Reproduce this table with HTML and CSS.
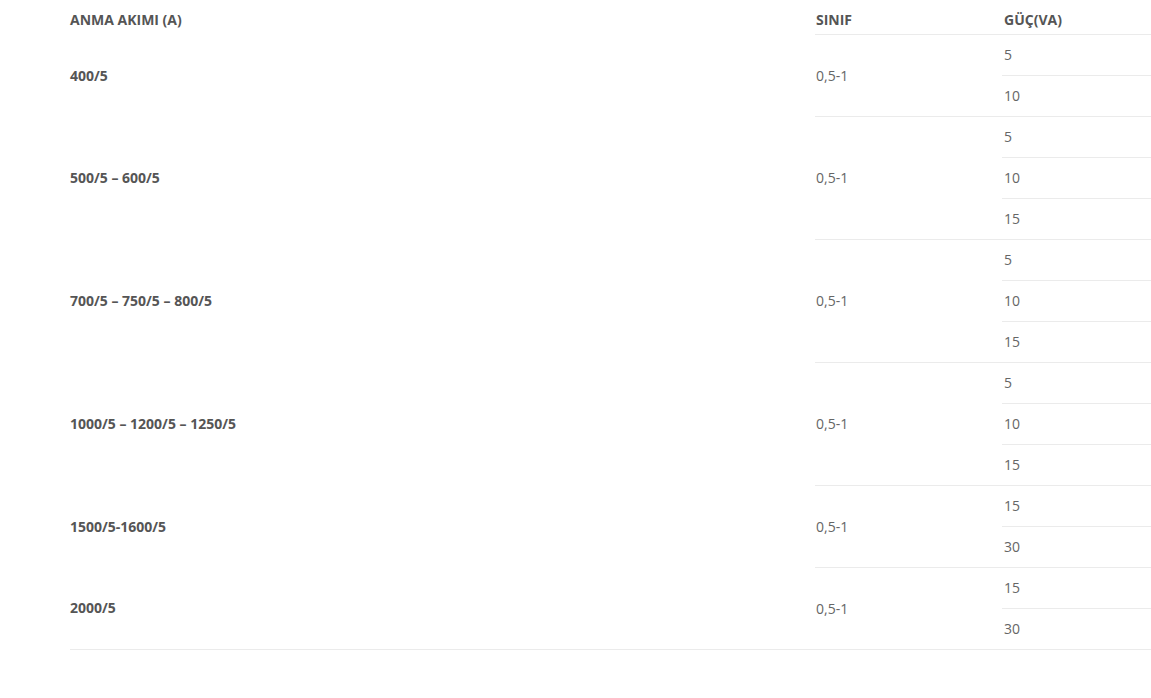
FILE: index.html
```html
<!DOCTYPE html>
<html lang="tr">
<head>
<meta charset="utf-8">
<link rel="stylesheet" href="styles.css">
</head>
<body>
<table class="spec">
  <thead>
    <tr>
      <th class="c1">ANMA AKIMI (A)</th>
      <th class="c2">SINIF</th>
      <th class="c3">GÜÇ(VA)</th>
    </tr>
  </thead>
  <tbody>
    <tr><td class="name" rowspan="2">400/5</td><td class="cls" rowspan="2">0,5-1</td><td class="va">5</td></tr>
    <tr><td class="va">10</td></tr>
    <tr><td class="name" rowspan="3">500/5 – 600/5</td><td class="cls" rowspan="3">0,5-1</td><td class="va">5</td></tr>
    <tr><td class="va">10</td></tr>
    <tr><td class="va">15</td></tr>
    <tr><td class="name" rowspan="3">700/5 – 750/5 – 800/5</td><td class="cls" rowspan="3">0,5-1</td><td class="va">5</td></tr>
    <tr><td class="va">10</td></tr>
    <tr><td class="va">15</td></tr>
    <tr><td class="name" rowspan="3">1000/5 – 1200/5 – 1250/5</td><td class="cls" rowspan="3">0,5-1</td><td class="va">5</td></tr>
    <tr><td class="va">10</td></tr>
    <tr><td class="va">15</td></tr>
    <tr><td class="name" rowspan="2">1500/5-1600/5</td><td class="cls" rowspan="2">0,5-1</td><td class="va">15</td></tr>
    <tr><td class="va">30</td></tr>
    <tr><td class="name" rowspan="2">2000/5</td><td class="cls" rowspan="2">0,5-1</td><td class="va">15</td></tr>
    <tr><td class="va">30</td></tr>
  </tbody>
</table>
</body>
</html>
```
FILE: styles.css
```css
html, body {
  margin: 0;
  padding: 0;
  background: #fff;
}
body {
  font-family: "Open Sans", "Liberation Sans", sans-serif;
  font-size: 14px;
  color: #666;
}
.spec {
  margin-left: 70px;
  width: 1081px;
  border-collapse: collapse;
  border-bottom: 1px solid #ebebeb;
}
.spec th {
  text-align: left;
  font-weight: 700;
  color: #555;
  padding: 10px 0 4px 1px;
  line-height: 20px;
}
.spec td {
  padding: 10px 0 10px 1px;
  line-height: 20px;
  vertical-align: middle;
  text-align: left;
}
.spec th.c1,
.spec td.name {
  padding-left: 0;
}
.spec .c1 { width: 745px; }
.spec .c2 { width: 186px; }
.spec .c3,
.spec td.va {
  padding-left: 2px;
}
.spec td.name {
  font-weight: 700;
  color: #555;
}
.spec td.cls,
.spec td.va {
  border-top: 1px solid #ebebeb;
}
```
